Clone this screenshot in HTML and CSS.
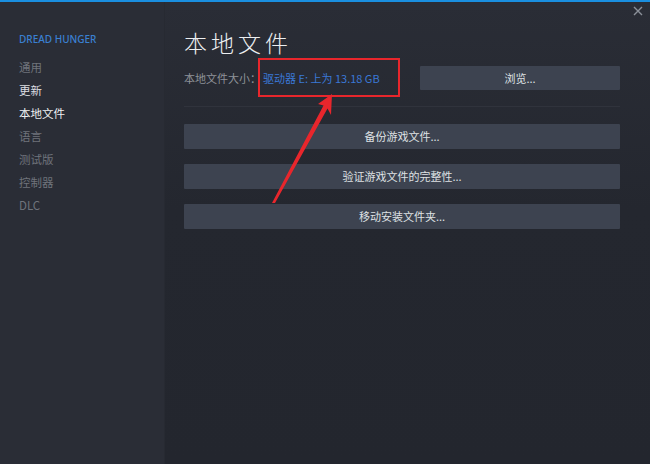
FILE: index.html
```html
<!DOCTYPE html>
<html lang="zh-CN">
<head>
<meta charset="utf-8">
<title>本地文件</title>
<link rel="stylesheet" href="styles.css">
</head>
<body>
<div class="window">
  <aside class="sidebar">
    <div class="game-title">DREAD HUNGER</div>
    <ul class="nav">
      <li class="nav-item dim">通用</li>
      <li class="nav-item">更新</li>
      <li class="nav-item active">本地文件</li>
      <li class="nav-item dim">语言</li>
      <li class="nav-item dim">测试版</li>
      <li class="nav-item dim">控制器</li>
      <li class="nav-item dim">DLC</li>
    </ul>
  </aside>
  <main class="content">
    <h1 class="title">本地文件</h1>
    <div class="size-row">
      <div class="size-info"><span class="size-label">本地文件大小：</span><span class="size-link">驱动器 E: 上为 13.18 GB</span></div>
      <button class="btn btn-browse">浏览...</button>
    </div>
    <div class="divider"></div>
    <div class="actions">
      <button class="btn">备份游戏文件...</button>
      <button class="btn">验证游戏文件的完整性...</button>
      <button class="btn">移动安装文件夹...</button>
    </div>
  </main>
  <div class="close">
    <svg width="10" height="10" viewBox="0 0 10 10"><path d="M1 1L9 9M9 1L1 9" stroke="#8b9099" stroke-width="1.4" fill="none"/></svg>
  </div>
  <svg class="annotation" width="650" height="464" viewBox="0 0 650 464">
    <rect x="259" y="59" width="140" height="37" fill="none" stroke="#e8262c" stroke-width="2"/>
    <polygon points="332,94 318,104 323.5,105.5 272,203 275,203 327.5,108.5 331,115" fill="#e8262c"/>
  </svg>
</div>
</body>
</html>
```
FILE: styles.css
```css
* { box-sizing: border-box; }
html, body { margin: 0; padding: 0; }
body {
  width: 650px;
  height: 464px;
  overflow: hidden;
  background: #24272f;
  font-family: "Noto Sans", "Noto Sans CJK SC", sans-serif;
}
.window {
  position: relative;
  display: flex;
  width: 650px;
  height: 464px;
  border-top: 2px solid #1a8fe0;
}
.sidebar {
  width: 165px;
  flex: none;
  background: #2a2d36;
  border-right: 1px solid #272a32;
  padding: 30px 0 0 19px;
}
.game-title {
  color: #3a80d2;
  font-size: 10px;
  font-weight: 500;
  line-height: 14px;
}
.nav {
  list-style: none;
  margin: 10px 0 0;
  padding: 0;
}
.nav-item {
  font-family: "Noto Sans CJK SC", "Noto Sans", sans-serif;
  font-size: 11.5px;
  line-height: 23px;
  height: 23px;
  color: #dcdee1;
}
.nav-item.dim { color: #6f737b; }
.nav-item.active { color: #eef0f2; }
.content {
  flex: 1;
  padding: 25px 30px 0 19px;
  background: linear-gradient(180deg, #2a2d36 0%, #24272f 45%, #23262e 100%);
}
.title {
  margin: 0;
  font-family: "Noto Sans CJK SC", sans-serif;
  font-weight: 300;
  font-size: 23px;
  line-height: 30px;
  letter-spacing: 4px;
  color: #eceef0;
}
.size-row {
  display: flex;
  justify-content: space-between;
  align-items: center;
  margin-top: 9px;
  height: 24px;
}
.size-info {
  font-family: "Noto Sans CJK SC", sans-serif;
  font-size: 11px;
  line-height: 24px;
}
.size-label { color: #8e9298; }
.size-link { color: #3a78d6; margin-left: 2px; }
.divider {
  height: 1px;
  background: #30333c;
  margin-top: 16px;
}
.actions {
  display: flex;
  flex-direction: column;
  gap: 15px;
  margin-top: 17px;
}
.btn {
  display: block;
  width: 100%;
  height: 25px;
  border: none;
  border-radius: 1px;
  background: #3d4350;
  color: #dfe1e4;
  font-family: "Noto Sans CJK SC", sans-serif;
  font-size: 11px;
  line-height: 25px;
  padding: 0;
  text-align: center;
}
.btn-browse {
  width: 200px;
  height: 24px;
  line-height: 24px;
}
.close {
  position: absolute;
  top: 4px;
  right: 7px;
  width: 10px;
  height: 10px;
}
.close svg { display: block; }
.annotation {
  position: absolute;
  left: 0;
  top: -2px;
  pointer-events: none;
}
```
